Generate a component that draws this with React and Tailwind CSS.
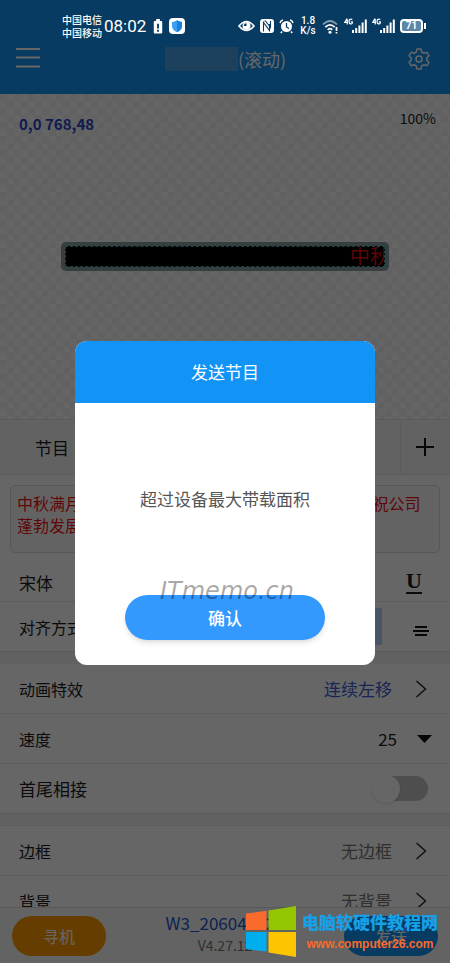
import React from 'react';

const font = "font-['Noto_Sans_CJK_SC','Noto_Sans',sans-serif]";

function Signal() {
  return (
    <svg width="23" height="16" viewBox="0 0 23 16" aria-hidden="true">
      <g fill="none" stroke="#fff" strokeWidth="1.2">
        <path d="M3 .5 .7 4.4H4M3.2 1v5.5M8.3 1.5C5.8.2 5 2 5 3.500 5 6.500 8.300 6.500 8.300 5V3.800H6.800" />
      </g>
      <path d="M8 12h2v3H8zM11.200 10h2v5h-2zM14.400 7.500h2V15h-2zM17.600 4.500h2V15h-2zM20.800 1.500h2V15h-2z" fill="#fff" />
    </svg>
  );
}

function StatusBar() {
  return (
    <div className="relative z-20 flex h-[46px] items-center justify-between pt-[6px] pr-6 pl-[62px] text-white">
      <div className="flex items-center gap-[2px]">
        <div className="text-[10px] leading-[13px] font-medium">
          <div>中国电信</div>
          <div>中国移动</div>
        </div>
        <span className="text-[17px] leading-5 font-['Roboto','Noto_Sans',sans-serif]">08:02</span>
        <svg className="ml-[5px]" width="10" height="15" viewBox="0 0 10 16" aria-hidden="true">
          <path d="M3 0h4v2h1.500q1 0 1 1v11.500q0 1-1 1h-7q-1 0-1-1V3q0-1 1-1H3z" fill="#fff" />
          <path d="M4 5h2v5H4zM4 11.500h2v2H4z" fill="#0a3a62" />
        </svg>
        <svg className="ml-1" width="16" height="16" viewBox="0 0 16 16" aria-hidden="true">
          <rect width="16" height="16" rx="4" fill="#fff" />
          <path d="M8 2.300q2.500 1.700 5 1.700v4q0 4-5 6.200Q3 12 3 8V4q2.500 0 5-1.700z" fill="#3ba0f3" />
          <path d="M8 2.300q2.500 1.700 5 1.700v4q0 4-5 6.200z" fill="#1b7fdc" />
        </svg>
      </div>
      <div className="flex items-center gap-[5px]">
        <svg width="17" height="14" viewBox="0 0 17 14" aria-hidden="true">
          <path d="M1 7q7.500-9 15 0-7.500 9-15 0z" fill="none" stroke="#fff" strokeWidth="1.700" />
          <circle cx="8.500" cy="7" r="4" fill="#fff" />
          <path d="M8.500 7V4.200A2.800 2.800 0 0 0 5.800 7z" fill="#0a3a62" />
        </svg>
        <svg width="14" height="14" viewBox="0 0 14 14" aria-hidden="true">
          <rect width="14" height="14" rx="3" fill="#fff" />
          <path d="M3.500 12.500V3.500l6 8V5M4.500 2h1l5 6.500V2" fill="none" stroke="#0a3a62" strokeWidth="1.100" />
        </svg>
        <svg width="15" height="15" viewBox="0 0 15 15" aria-hidden="true">
          <circle cx="7.500" cy="7.500" r="5.500" fill="#fff" />
          <path d="M1 4Q1.500 1.500 4 1M11 1q2.500.500 3 3M3 12.500 1.800 14M12 12.500l1.200 1.500" stroke="#fff" strokeWidth="1.500" fill="none" />
          <path d="M7.500 4v4l2.500 1.500" stroke="#0a3a62" strokeWidth="1.300" fill="none" />
        </svg>
        <div className="w-[18px] text-center text-[10px] leading-[10px] font-medium font-['Roboto','Noto_Sans',sans-serif]">
          <div>1.8</div>
          <div>K/s</div>
        </div>
        <svg width="17" height="15" viewBox="0 0 17 15" aria-hidden="true">
          <g fill="none" stroke="#fff" strokeWidth="1.700">
            <path d="M1 5.500q7-7 14 0" opacity=".5" />
            <path d="M3.300 8.200q4.700-4.700 9.400 0M5.700 10.800q2.300-2.300 4.600 0" />
            <path d="M14.500 8v4M14.500 13v1.500" />
          </g>
          <circle cx="8" cy="13.200" r="1.500" fill="#fff" />
        </svg>
        <Signal />
        <Signal />
        <div className="flex items-center gap-[1px]">
          <span className="flex h-[14px] w-[23px] items-center justify-center rounded-[4px] border-2 border-white bg-[#5b87a8] text-[10px] leading-none font-bold font-['Roboto','Noto_Sans',sans-serif]">71</span>
          <span className="h-[6px] w-[2px] bg-white" />
        </div>
      </div>
    </div>
  );
}

function Chevron() {
  return (
    <svg width="12" height="18" viewBox="0 0 12 18" fill="none" stroke="#222" strokeWidth="1.400" aria-hidden="true">
      <path d="M1.500 1l9 8-9 8" />
    </svg>
  );
}

function LinkRow({ label, value, tone }) {
  return (
    <button type="button" className="flex h-[50px] w-full shrink-0 items-center border-b border-[#ececec] pr-[23px] pl-[19px] text-left">
      <span className="text-base">{label}</span>
      <span className={`mr-[23px] ml-auto text-[17px] ${tone}`}>{value}</span>
      <Chevron />
    </button>
  );
}

function WindowsMark() {
  return (
    <svg width="50" height="51" viewBox="0 0 50 51" aria-hidden="true">
      <path d="M0 7.500 20.500 4.800V24H0z" fill="#f96a2c" />
      <path d="M22.500 4.500 50 0v24H22.500z" fill="#93c500" />
      <path d="M0 26h20.500v19.500L0 43z" fill="#00aef0" />
      <path d="M22.500 26H50v25l-27.500-4.500z" fill="#fdc500" />
    </svg>
  );
}

const programText = '中秋满月'.padEnd(22, '\u3000') + ' 祝公司\n蓬勃发展';

export default function App() {
  return (
    <div className={`relative flex h-screen w-full flex-col overflow-hidden bg-white text-[#1c1c1c] ${font}`}>
      <header className="shrink-0 bg-[#1294f6]">
        <StatusBar />
        <div className="flex h-12 items-start justify-between pr-5 pl-[15px] text-white">
          <button type="button" aria-label="Menu" className="w-7 pt-px">
            <svg width="26" height="22" viewBox="0 0 26 22" stroke="#fff" strokeWidth="2" aria-hidden="true">
              <path d="M1 2h24M1 10.500h24M1 19.500h24" />
            </svg>
          </button>
          <h1 className="flex items-center text-lg leading-[26px] font-normal">
            <span className="h-6 w-[73px] bg-[#4aa3e6]" />
            (滚动)
          </h1>
          <button type="button" aria-label="Settings" className="pt-[2px]">
            <svg width="22" height="22" viewBox="0 0 22 22" fill="none" stroke="#fff" strokeWidth="1.500" strokeLinejoin="round" aria-hidden="true">
              <path d="M9 1h4l.7 3 2.300 1.300 3-1 2 3.500L18.800 10v2.200l2.200 2-2 3.500-3-1-2.300 1.300L13 21H9l-.7-3L6 16.700l-3 1-2-3.500 2.200-2V10L1 7.800l2-3.500 3 1L8.300 4z" />
              <circle cx="11" cy="11" r="3" />
            </svg>
          </button>
        </div>
      </header>

      <section className="flex h-[325px] shrink-0 flex-col bg-[repeating-conic-gradient(#fcfcfc_0_25%,#f3f3f3_0_50%)] bg-[length:14px_14px]">
        <div className="flex h-[60px] justify-between pt-[14px] pr-[14px] pl-[19px]">
          <span className="pt-1 text-[15px] leading-6 font-bold text-[#2a45c8]">0,0 768,48</span>
          <span className="text-[14px] leading-5">100%</span>
        </div>
        <div className="flex flex-1 items-center justify-center pb-[60px]">
          <div className="w-[328px] rounded-[5px] bg-[#8a9c9e] p-1">
            <div className="flex h-[21px] items-center justify-end overflow-hidden border border-dashed border-[#3ba7ad] bg-black">
              <div className="h-5 w-[34px] overflow-hidden text-xl leading-5 whitespace-nowrap text-[#dd1111] font-['Liberation_Serif','Noto_Sans_CJK_SC',serif]">中秋</div>
            </div>
          </div>
        </div>
      </section>

      <main className="flex min-h-0 flex-1 flex-col overflow-hidden">
        <div className="flex h-14 shrink-0 items-stretch border-y border-[#e4e4e4] bg-[#f6f6f6]">
          <span className="flex flex-1 items-center pt-[2px] pl-[35px] text-[17px]">节目</span>
          <button type="button" aria-label="Add program" className="flex w-[50px] items-center justify-center border-l border-[#e4e4e4] pr-[2px]">
            <svg width="18" height="18" viewBox="0 0 18 18" stroke="#111" strokeWidth="2" aria-hidden="true">
              <path d="M9 0v18M0 9h18" />
            </svg>
          </button>
        </div>

        <div className="shrink-0 px-[10px] pt-[10px]">
          <textarea
            aria-label="Program text"
            defaultValue={programText}
            className="block h-[68px] w-full resize-none overflow-hidden rounded-[5px] border border-[#dadada] bg-[#f8f8f8] px-[6px] py-[6px] text-base leading-[22px] whitespace-pre text-[#f01018]"
          />
        </div>

        <div className="flex h-[49px] shrink-0 items-center justify-between border-b border-[#e8e8e8] pt-3 pr-7 pl-[19px]">
          <span className="text-[17px]">宋体</span>
          <button type="button" aria-label="Underline" className="pb-1 text-[22px] leading-6 font-bold underline decoration-2 underline-offset-4 font-['Liberation_Serif',serif]">U</button>
        </div>

        <div className="flex h-[50px] shrink-0 items-center border-b border-[#e0e0e0] pr-5 pl-[19px]">
          <span className="text-base">对齐方式</span>
          <button type="button" aria-label="Align left" className="mr-[30px] ml-auto h-[37px] w-12 bg-[#bad8ff]" />
          <button type="button" aria-label="Align middle" className="pt-2">
            <svg width="18" height="12" viewBox="0 0 18 12" stroke="#111" strokeWidth="2" aria-hidden="true">
              <path d="M3 2h12M1 6h16M3 10h12" />
            </svg>
          </button>
        </div>
        <div className="h-3 shrink-0 bg-[#f2f2f2]" />

        <LinkRow label="动画特效" value="连续左移" tone="text-[#3a5ad6]" />
        <label className="flex h-[50px] shrink-0 items-center border-b border-[#ececec] pr-[18px] pl-[19px]">
          <span className="text-base">速度</span>
          <select defaultValue="25" className="mr-5 ml-auto appearance-none bg-transparent text-right text-[17px]">
            <option>25</option>
          </select>
          <svg width="15" height="8" viewBox="0 0 15 8" fill="#111" aria-hidden="true">
            <path d="M0 0h15L7.500 8z" />
          </svg>
        </label>
        <label className="flex h-[49px] shrink-0 items-center justify-between pr-[22px] pl-[19px]">
          <span className="text-[17px]">首尾相接</span>
          <span className="flex h-[25px] w-[52px] items-center rounded-full bg-[#c4c4c4]">
            <input type="checkbox" className="-ml-1 size-7 appearance-none rounded-full bg-white shadow-sm" />
          </span>
        </label>
        <div className="h-[13px] shrink-0 border-y border-[#e6e6e6] bg-[#f2f2f2]" />
        <LinkRow label="边框" value="无边框" tone="text-[#777]" />
        <LinkRow label="背景" value="无背景" tone="text-[#777]" />
      </main>

      <footer className="flex h-14 shrink-0 items-center justify-between border-t border-[#dcdcdc] bg-[#f8f8f8] px-3">
        <button type="button" className="h-10 w-[94px] rounded-full bg-[#ff9a00] text-base text-white">寻机</button>
        <div className="pb-[6px] text-center">
          <div className="text-[17px] leading-6 text-[#1f56d0]">W3_206048523</div>
          <div className="text-sm leading-5 text-[#777]">V4.27.12</div>
        </div>
        <button type="button" className="h-10 w-[94px] rounded-full bg-[#1294f6] text-base text-white">发送</button>
      </footer>

      <div className="absolute inset-0 z-10 flex items-center justify-center bg-black/60 pt-[43px]">
        <div role="dialog" aria-modal="true" aria-labelledby="dialog-title" className="w-[300px] overflow-hidden rounded-xl bg-white">
          <h2 id="dialog-title" className="bg-[#1294f6] py-[17px] text-center text-[17px] leading-7 font-normal text-white">发送节目</h2>
          <div className="flex flex-col items-center pb-[25px]">
            <p className="py-[84px] text-[17px] leading-6 text-[#555]">超过设备最大带载面积</p>
            <button type="button" className="h-[45px] w-[200px] rounded-full bg-[#3399ff] text-[17px] font-medium text-white shadow-md">确认</button>
          </div>
        </div>
      </div>

      <div className="pointer-events-none absolute top-[577px] left-[160px] z-20 text-2xl leading-7 text-black/35 italic font-['DejaVu_Sans',sans-serif]">ITmemo.cn</div>

      <div className="pointer-events-none absolute right-[10px] bottom-[6px] z-20 flex items-center gap-1">
        <WindowsMark />
        <div className="w-[140px] text-center font-bold whitespace-nowrap">
          <div className="text-[17px] leading-6 font-black text-[#16a0e8]">电脑软硬件教程网</div>
          <div className="text-xs leading-5 text-[#f96a2c] font-['Liberation_Sans',sans-serif]">www.computer26.com</div>
        </div>
      </div>
    </div>
  );
}
